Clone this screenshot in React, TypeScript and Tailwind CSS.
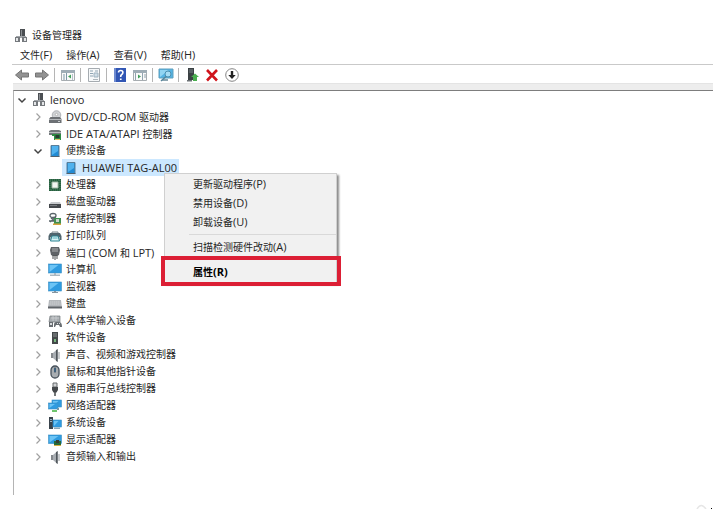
import { useState, type ReactNode } from "react";

type IconName =
  | "computer" | "optical" | "ide" | "portable" | "cpu" | "disk" | "storage"
  | "printer" | "port" | "pc" | "monitor" | "keyboard" | "hid" | "software"
  | "sound" | "mouse" | "usb" | "network" | "system" | "display" | "audio";

const screen = (x: number, y: number, w: number, h: number) => (
  <g>
    <rect x={x} y={y} width={w} height={h} fill="#2f9be0" stroke="#3b8fc4" strokeWidth="0.6" />
    <path d={`M${x + 1} ${y + h - 1}V${y + 1}H${x + w - 3}Z`} fill="#6cc4f5" />
  </g>
);

const speaker = (
  <>
    <path d="M3 5h3v5H3z" fill="#85898d" />
    <path d="M5 5l4.500-4v13L5 10z" fill="#a9aeb3" />
    <path d="M8 2.300L9.700 1v13L8 12.700z" fill="#50565b" />
    <path d="M11 4v7" stroke="#a7abaf" strokeWidth="1.200" />
  </>
);

const drawings: Record<IconName, ReactNode> = {
  computer: (
    <>
      <path d="M6 0h5v9H6z" fill="#4b4f53" />
      <path d="M7 1h1v7H7z" fill="#8a8e92" />
      <path d="M2 7h10v2H2z" fill="#a2a6aa" />
      <path d="M1 8h5v5H1zM8 8h5v5H8z" fill="#75797d" />
      <path d="M2 9h2v3H2zM10 9h2v3h-2z" fill="#e4e6e8" />
    </>
  ),
  optical: (
    <>
      <circle cx="8.500" cy="5" r="4.300" fill="#cfd2d5" stroke="#a3a7ab" strokeWidth="0.8" />
      <circle cx="8.500" cy="4.500" r="1.200" fill="#fff" stroke="#999" strokeWidth="0.6" />
      <path d="M2.500 7h9.500l1.500 2v4H1V9z" fill="#6d7175" />
      <path d="M1 9h12.500v1H1z" fill="#b5b9bc" />
      <path d="M10 11h2v1h-2z" fill="#c9cdd0" />
    </>
  ),
  ide: (
    <>
      <path d="M1 4l2-1h8l2 1v4H1z" fill="#73787b" />
      <path d="M1 5h12v1H1z" fill="#b9bdbf" />
      <path d="M4 7h9v6H6V9H4z" fill="#2d8b43" />
      <path d="M7.500 8h4v3h-4z" fill="#293b31" />
      <path d="M7 12h5v1H7z" fill="#dfc06a" />
    </>
  ),
  portable: (
    <>
      <path d="M3 1.500h8v11H3z" fill="#218bd4" stroke="#5b7f99" />
      <path d="M4 2h6v5l-6 4z" fill="#50b2ee" />
      <path d="M2.500 12h9v1h-9z" fill="#51616d" />
    </>
  ),
  cpu: (
    <>
      <path d="M1 1h12v12H1z" fill="#255f3e" />
      <path d="M2 2h10v10H2z" fill="none" stroke="#528466" strokeDasharray="1 1" />
      <path d="M4 4h6v6H4z" fill="#f2f6f2" stroke="#a4bba9" />
    </>
  ),
  disk: (
    <>
      <path d="M3 7h9l1 2.500H1z" fill="#c7cacd" />
      <path d="M1 9h12v4H1z" fill="#44484c" />
      <path d="M2 10h7v1H2z" fill="#777b7f" />
    </>
  ),
  storage: (
    <>
      <path d="M2 3.500q0-2 3-2t3 2-3 2-3-2M3 6l5 4M8 5l-6 5M1 9h5" fill="none" stroke="#596469" strokeWidth="1.300" />
      <path d="M6 6h7v6H6z" fill="#3f9052" />
      <path d="M8 7h3v3H8z" fill="#cbd4cd" />
      <path d="M5 11.500h8V13H5z" fill="#d6a43f" />
    </>
  ),
  printer: (
    <>
      <path d="M4 3h6v2H4z" fill="#e9edef" stroke="#79868c" />
      <path d="M2 4h10l1.500 3v4h-2V8h-9v3h-2V7z" fill="#50656e" />
      <path d="M4 7h6l1.500 5h-9z" fill="#d8f5f7" stroke="#298190" />
      <path d="M4.500 9h5" stroke="#5aaebb" />
    </>
  ),
  port: (
    <>
      <path d="M3 1h8l1 3-1 5-2 1H5L3 9 2 4z" fill="#5e6266" />
      <path d="M4 2h6v4H4z" fill="#a3a7aa" />
      <path d="M5 2v4M7 2v4M9 2v4" stroke="#505356" strokeWidth="0.7" />
      <path d="M5 9v4M7 9v5M9 9v4" stroke="#494c4f" />
    </>
  ),
  pc: (
    <>
      {screen(0.5, 1, 13, 9)}
      <path d="M6 10h2v1.500h4V13H2v-1.500h4z" fill="#aab8c1" />
    </>
  ),
  monitor: (
    <>
      {screen(0.5, 2, 13, 9)}
      <path d="M6 11h2v1h2v1H4v-1h2z" fill="#8595a0" />
    </>
  ),
  keyboard: (
    <>
      <path d="M1 3h12l1 8H0z" fill="#b3b7bb" />
      <path d="M2 5h10M1.500 7h11" stroke="#cdd0d3" strokeDasharray="1.500 0.5" />
      <path d="M0 9.500h14V11.500H0z" fill="#5e6368" />
    </>
  ),
  hid: (
    <>
      <path d="M2 2h10v6H1z" fill="#a8acb0" stroke="#777c80" strokeWidth="0.7" />
      <path d="M3 4h8M5 2v5M8 2v5" stroke="#d0d3d6" strokeWidth="0.7" />
      <path d="M1 13V8h4v5M6 11q0-3 2-3h3q3 0 3 5h-2l-1-2H8l-1 2H6z" fill="#686d71" />
      <path d="M2 9h2v2H2zM9 9h1v1H9zM11 9h1v1h-1z" fill="#d9dcde" />
    </>
  ),
  software: (
    <>
      <path d="M4 1h6v12H4z" fill="#44484a" />
      <path d="M5 3h4M5 5h4" stroke="#8b9092" />
      <path d="M6 8h2v3H6z" fill="#78b780" />
    </>
  ),
  sound: speaker,
  mouse: (
    <>
      <rect x="3" y="1" width="8" height="12" rx="4" fill="#a8adb1" stroke="#46505a" strokeWidth="1.300" />
      <path d="M7 1v7" stroke="#5c656e" />
      <path d="M6 3h2v4H6z" fill="#41617c" />
    </>
  ),
  usb: (
    <>
      <path d="M5 1h4v4H5z" fill="#d0d2d4" stroke="#666a6d" />
      <path d="M4 5h6v3L8.500 10.500h-3L4 8z" fill="#44484b" />
      <path d="M7 10v4" stroke="#44484b" strokeWidth="1.500" />
    </>
  ),
  network: (
    <>
      {screen(4, 1, 9.5, 7)}
      {screen(0.5, 4, 9.5, 6)}
      <path d="M4 11h3v1H4zM9 9h2v2H9z" fill="#7796a7" />
      <path d="M4 11h5v2H4z" fill="#6fc56d" />
    </>
  ),
  system: (
    <>
      <path d="M1 1h4v12H1z" fill="#39434c" />
      <path d="M2 3h2v1H2zM2 5h2v1H2z" fill="#99b4c6" />
      {screen(5, 4, 8.5, 7)}
      <path d="M6 11.500h6V13H6z" fill="#8ba7b7" />
    </>
  ),
  display: (
    <>
      {screen(0.5, 2, 13, 8.5)}
      <path d="M6 8h7v4H6z" fill="#276b3b" />
      <path d="M8 7h3v3H8z" fill="#333d36" />
      <path d="M6 12h7v1H6z" fill="#d8b044" />
    </>
  ),
  audio: speaker,
};

function DeviceIcon({ name }: { name: IconName }) {
  return (
    <svg viewBox="0 0 14 14" className="h-3.5 w-3.5 shrink-0" aria-hidden="true">
      {drawings[name]}
    </svg>
  );
}

/* Latin runs are set one step larger than the Chinese around them. */
function Label({ text }: { text: string }) {
  return (
    <span className="whitespace-pre">
      {text.split(/([A-Za-z][\x20-\x7e]*|[()][\x20-\x7e]*)/).map((part, i) =>
        i % 2 ? (
          <span key={i} className="text-[11px]">{part}</span>
        ) : (
          part
        ),
      )}
    </span>
  );
}

function Chevron({ open, name, onClick }: { open: boolean; name: string; onClick?: () => void }) {
  return (
    <button type="button" aria-label={name} aria-expanded={open} onClick={onClick} className="flex h-4 w-4 shrink-0 items-center justify-center">
      <svg viewBox="0 0 10 10" className="h-2.5 w-2.5" fill="none" aria-hidden="true">
        {open ? (
          <path d="M1.500 3.500L5 7l3.500-3.500" stroke="#444" strokeWidth="1.500" />
        ) : (
          <path d="M3.500 1.500L7 5 3.500 8.500" stroke="#a0a0a0" strokeWidth="1.200" />
        )}
      </svg>
    </button>
  );
}

const devices: { icon: IconName; label: string }[] = [
  { icon: "optical", label: "DVD/CD-ROM 驱动器" },
  { icon: "ide", label: "IDE ATA/ATAPI 控制器" },
  { icon: "portable", label: "便携设备" },
  { icon: "cpu", label: "处理器" },
  { icon: "disk", label: "磁盘驱动器" },
  { icon: "storage", label: "存储控制器" },
  { icon: "printer", label: "打印队列" },
  { icon: "port", label: "端口 (COM 和 LPT)" },
  { icon: "pc", label: "计算机" },
  { icon: "monitor", label: "监视器" },
  { icon: "keyboard", label: "键盘" },
  { icon: "hid", label: "人体学输入设备" },
  { icon: "software", label: "软件设备" },
  { icon: "sound", label: "声音、视频和游戏控制器" },
  { icon: "mouse", label: "鼠标和其他指针设备" },
  { icon: "usb", label: "通用串行总线控制器" },
  { icon: "network", label: "网络适配器" },
  { icon: "system", label: "系统设备" },
  { icon: "display", label: "显示适配器" },
  { icon: "audio", label: "音频输入和输出" },
];

function ContextMenu() {
  const item = "flex h-[19px] w-full items-center pl-7 text-left hover:bg-white";
  return (
    <div role="menu" className="absolute left-[102px] top-[14px] z-10 w-[173px] border border-[#d0d0d0] bg-[#f1f1f1] pb-px shadow-[2px_2px_2px_#8c8c8c]">
      <button type="button" role="menuitem" className={item}><Label text="更新驱动程序(P)" /></button>
      <button type="button" role="menuitem" className={item}><Label text="禁用设备(D)" /></button>
      <button type="button" role="menuitem" className={item}><Label text="卸载设备(U)" /></button>
      <div role="separator" className="my-[2px] ml-6 border-b border-[#d9d9d9] pb-px" />
      <button type="button" role="menuitem" className={item}><Label text="扫描检测硬件改动(A)" /></button>
      <div role="separator" className="my-[2px] ml-6 border-b border-[#d9d9d9] pb-px" />
      <div className="relative">
        <button type="button" role="menuitem" className={`${item} font-bold text-black`}><Label text="属性(R)" /></button>
        <div className="pointer-events-none absolute -bottom-[5px] -left-1 -right-[5px] -top-[6px] border-4 border-[#dc1f35]" />
      </div>
    </div>
  );
}

function ToolButton({ label, children }: { label: string; children: ReactNode }) {
  return (
    <button type="button" aria-label={label} className="flex h-[18px] w-5 items-center justify-center">
      <svg viewBox="0 0 16 16" className="h-4 w-4" fill="none" aria-hidden="true">{children}</svg>
    </button>
  );
}

function Divider() {
  return <span className="ml-[2px] mr-[3px] h-3.5 w-px bg-[#b5b5b5]" />;
}

function Toolbar() {
  return (
    <div role="toolbar" className="flex h-[19px] items-center border-t border-[#c9c9c9] pt-[2px]">
      <ToolButton label="后退">
        <path d="M1.500 8l6-5v3h7v4h-7v3z" fill="#929292" stroke="#757575" />
      </ToolButton>
      <ToolButton label="前进">
        <path d="M14.500 8l-6-5v3h-7v4h7v3z" fill="#929292" stroke="#757575" />
      </ToolButton>
      <Divider />
      <ToolButton label="显示控制台树">
        <path d="M1.500 3.500h13v10h-13z" fill="#fafafa" stroke="#a7adb1" />
        <path d="M1 3h14v3H1z" fill="#9fadb6" />
        <path d="M6.500 6v7M3 8h2M3 10h2M3 12h2" stroke="#7d98a8" />
        <path d="M8 9.500l3-2v4z" fill="#43a05a" />
        <path d="M12.500 7v6" stroke="#b7c4cc" />
      </ToolButton>
      <Divider />
      <ToolButton label="属性">
        <path d="M2.500 1.500h11v13h-11z" fill="#f6f8f9" stroke="#a5abb0" />
        <path d="M4 4h3M4 6.500h3M4 9h3M9 4h3" stroke="#8fa5b3" />
        <path d="M8 6h4v4H8z" fill="#cfdde6" stroke="#9fb3c0" />
        <path d="M7 12.500h5" stroke="#adb7bd" />
      </ToolButton>
      <Divider />
      <ToolButton label="帮助">
        <path d="M2 1h12v14H2z" fill="#3156b4" />
        <path d="M2 1h2v14H2z" fill="#6e8bd0" />
        <path d="M6.500 5.500q0-2 2.200-2t2.200 2q0 1.300-1.200 2T8.700 10" stroke="#fff" strokeWidth="1.600" />
        <path d="M7.900 11.500h1.700V13H7.900z" fill="#fff" />
      </ToolButton>
      <ToolButton label="显示操作窗格">
        <path d="M1.500 3.500h13v10h-13z" fill="#fafafa" stroke="#a7adb1" />
        <path d="M1 3h14v3H1z" fill="#9fadb6" />
        <path d="M10.500 6v7M3.500 6v7M12 8h2M12 10h2" stroke="#91a4b0" />
        <path d="M6 7.500l3 2-3 2z" fill="#43a05a" />
      </ToolButton>
      <Divider />
      <ToolButton label="扫描检测硬件改动">
        <path d="M1 2h14v9H1z" fill="#54b3e4" stroke="#5f9fbd" />
        <path d="M2 10V3h9z" fill="#91d4f2" />
        <path d="M5 12h5v2H4z" fill="#8da5b1" />
        <circle cx="10" cy="7" r="3" fill="#a5dcf4" stroke="#4b8fb0" />
        <path d="M8 9.500l-5 4.500" stroke="#56859b" strokeWidth="1.500" />
      </ToolButton>
      <Divider />
      <ToolButton label="更新驱动程序">
        <path d="M4 1h6v12H4z" fill="#3b4144" />
        <path d="M5 3h4M5 5h4" stroke="#777e82" />
        <path d="M11 6.500l4 3.500h-2v4h-4v-4H7z" fill="#4aae50" />
        <path d="M3 13h5v1.500H3z" fill="#6b7074" />
      </ToolButton>
      <ToolButton label="卸载设备">
        <path d="M3 3l10 10.500M13 3L3 13.500" stroke="#d0141c" strokeWidth="2.600" />
      </ToolButton>
      <ToolButton label="禁用设备">
        <circle cx="8" cy="8" r="6.300" fill="#fff" stroke="#858585" />
        <path d="M6.800 4h2.400v4h2.500L8 12 4.300 8h2.500z" fill="#222" />
      </ToolButton>
    </div>
  );
}

export default function App() {
  const [rootOpen, setRootOpen] = useState(true);
  const [open, setOpen] = useState<Record<string, boolean>>({ 便携设备: true });

  return (
    <div className="relative flex min-h-screen flex-col overflow-hidden bg-white pb-3.5 pl-3 pt-[27px] font-['Open_Sans','Noto_Sans_CJK_SC',sans-serif] text-[10px] leading-[17px] text-[#262626]">
      <header className="flex h-[17px] items-center gap-1 pl-[2px]">
        <DeviceIcon name="computer" />
        <h1><Label text="设备管理器" /></h1>
      </header>

      <nav className="flex h-5 items-center gap-3.5 pl-2 pt-px">
        {["文件(F)", "操作(A)", "查看(V)", "帮助(H)"].map((name) => (
          <button key={name} type="button"><Label text={name} /></button>
        ))}
      </nav>

      <Toolbar />
      <div className="ml-px h-[7px] border-t border-[#e4e4e4] bg-[#ededed]" />

      <main className="ml-px grow border-l border-t border-l-[#b4b4b4] border-t-[#7d7d7d]">
        <ul role="tree">
          <li role="treeitem" aria-expanded={rootOpen}>
            <div className="flex h-[17px] items-center">
              <Chevron open={rootOpen} name="lenovo" onClick={() => setRootOpen(!rootOpen)} />
              <span className="flex items-center gap-1 pl-[2px]">
                <DeviceIcon name="computer" />
                <Label text="lenovo" />
              </span>
            </div>
            {rootOpen && (
              <ul role="group" className="pl-4">
                {devices.map(({ icon, label }) => (
                  <li key={label} role="treeitem" aria-expanded={!!open[label]}>
                    <div className="flex h-[17px] items-center">
                      <Chevron open={!!open[label]} name={label} onClick={() => setOpen({ ...open, [label]: !open[label] })} />
                      <span className="flex items-center gap-1 pl-[2px]">
                        <DeviceIcon name={icon} />
                        <Label text={label} />
                      </span>
                    </div>
                    {icon === "portable" && open[label] && (
                      <ul role="group" className="pl-8">
                        <li role="treeitem" aria-selected="true" className="relative flex h-[17px]">
                          <span className="flex h-[17px] items-center gap-1 bg-[#cce8ff] px-[2px]">
                            <DeviceIcon name="portable" />
                            <Label text="HUAWEI TAG-AL00" />
                          </span>
                          <ContextMenu />
                        </li>
                      </ul>
                    )}
                  </li>
                ))}
              </ul>
            )}
          </li>
        </ul>
      </main>

      <svg viewBox="0 0 18 5" className="absolute bottom-0 right-0 h-[5px] w-[18px]" aria-hidden="true">
        <path d="M2 5q4-7 9 0" fill="none" stroke="#e6e6e6" strokeWidth="1.500" />
        <path d="M16 4h1v1h-1z" fill="#000" />
      </svg>
    </div>
  );
}
